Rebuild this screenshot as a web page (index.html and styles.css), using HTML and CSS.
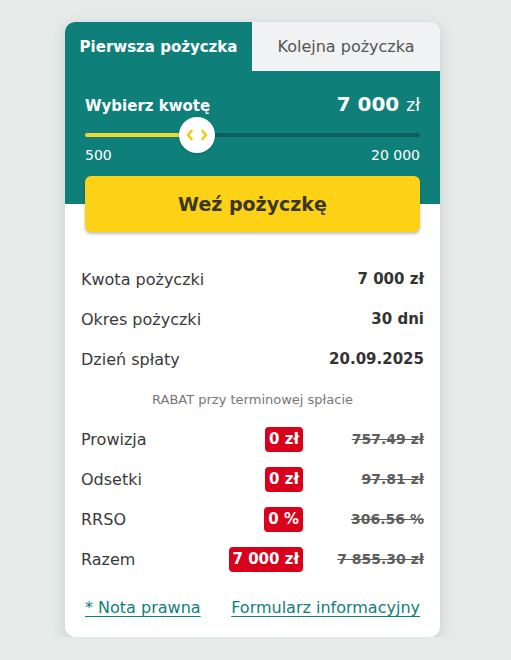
FILE: index.html
```html
<!DOCTYPE html>
<html lang="pl">
<head>
<meta charset="utf-8">
<link rel="stylesheet" href="styles.css">
</head>
<body>
<div class="card">
  <div class="tabs">
    <div class="tab active">Pierwsza pożyczka</div>
    <div class="tab">Kolejna pożyczka</div>
  </div>
  <div class="header">
    <div class="amount-row">
      <span class="amount-label">Wybierz kwotę</span>
      <span class="amount-value">7 000 <span class="cur">zł</span></span>
    </div>
    <div class="slider">
      <div class="track"><div class="fill" style="width:33.5%"></div></div>
      <div class="thumb" style="left:33.5%">
        <svg width="22" height="12" viewBox="0 0 22 12"><path d="M5.5 2 L2 6 L5.5 10" fill="none" stroke="#f5c816" stroke-width="2.6" stroke-linecap="round" stroke-linejoin="round"/><path d="M16.5 2 L20 6 L16.5 10" fill="none" stroke="#f5c816" stroke-width="2.6" stroke-linecap="round" stroke-linejoin="round"/></svg>
      </div>
    </div>
    <div class="range">
      <span>500</span>
      <span>20 000</span>
    </div>
    <button class="cta">Weź pożyczkę</button>
  </div>
  <div class="details">
    <div class="row"><span class="label">Kwota pożyczki</span><span class="val">7 000 zł</span></div>
    <div class="row"><span class="label">Okres pożyczki</span><span class="val">30 dni</span></div>
    <div class="row"><span class="label">Dzień spłaty</span><span class="val">20.09.2025</span></div>
    <div class="rabat">RABAT przy terminowej spłacie</div>
    <div class="row"><span class="label">Prowizja</span><span class="disc"><span class="badge">0 zł</span><s class="old">757.49 zł</s></span></div>
    <div class="row"><span class="label">Odsetki</span><span class="disc"><span class="badge">0 zł</span><s class="old">97.81 zł</s></span></div>
    <div class="row"><span class="label">RRSO</span><span class="disc"><span class="badge">0 %</span><s class="old">306.56 %</s></span></div>
    <div class="row"><span class="label">Razem</span><span class="disc"><span class="badge">7 000 zł</span><s class="old">7 855.30 zł</s></span></div>
  </div>
  <div class="links">
    <a href="#">* Nota prawna</a>
    <a href="#">Formularz informacyjny</a>
  </div>
</div>
</body>
</html>
```
FILE: styles.css
```css
* { box-sizing: border-box; }
body {
  margin: 0;
  background: #e6ebea;
  font-family: "DejaVu Sans", "Noto Sans", sans-serif;
  color: #333;
}
.card {
  width: 375px;
  margin: 22px 0 0 65px;
  background: #fff;
  border-radius: 10px;
  overflow: hidden;
  box-shadow: 0 4px 14px rgba(60, 80, 80, 0.18);
}
.tabs {
  display: flex;
  height: 49px;
}
.tab {
  display: flex;
  align-items: center;
  justify-content: center;
  font-size: 16px;
  color: #555;
  background: #f1f2f3;
  flex: 1;
}
.tab.active {
  flex: 0 0 187px;
  background: #0f7f7a;
  color: #fff;
  font-weight: 700;
  font-size: 15px;
}
.header {
  padding: 20px 20px 0;
  background: linear-gradient(#0f7f7a calc(100% - 28px), #fff 0);
}
.amount-row {
  display: flex;
  justify-content: space-between;
  align-items: baseline;
  color: #fff;
  height: 26px;
  line-height: 26px;
}
.amount-label {
  font-size: 15px;
  font-weight: 700;
}
.amount-value {
  font-size: 20px;
  font-weight: 700;
}
.cur {
  font-size: 17px;
  font-weight: 400;
}
.slider {
  position: relative;
  height: 28px;
  margin-top: 4px;
  display: flex;
  align-items: center;
}
.track {
  width: 100%;
  height: 4px;
  border-radius: 2px;
  background: #0a615d;
}
.fill {
  height: 100%;
  background: #f2d634;
  border-radius: 2px;
}
.thumb {
  position: absolute;
  top: 50%;
  width: 36px;
  height: 36px;
  margin: -18px 0 0 -18px;
  border-radius: 50%;
  background: #fff;
  display: flex;
  align-items: center;
  justify-content: center;
  box-shadow: 0 1px 3px rgba(0,0,0,0.15);
}
.range {
  display: flex;
  justify-content: space-between;
  color: #fff;
  font-size: 14px;
  height: 12px;
  line-height: 12px;
  align-items: center;
}
.cta {
  display: block;
  width: 100%;
  height: 56px;
  margin-top: 15px;
  border: 0;
  border-radius: 6px;
  background: #fdd116;
  color: #3b3726;
  font-family: inherit;
  font-size: 19px;
  font-weight: 600;
  box-shadow: 0 2px 3px rgba(0,0,0,0.25);
}
.details {
  padding: 27px 16px 0;
}
.row {
  display: flex;
  justify-content: space-between;
  align-items: center;
  height: 40px;
  font-size: 16px;
}
.label { color: #3a3a3a; }
.val { font-weight: 700; color: #333; font-size: 15px; }
.rabat {
  height: 40px;
  display: flex;
  align-items: center;
  justify-content: center;
  font-size: 13px;
  color: #777;
}
.disc {
  display: flex;
  align-items: center;
}
.badge {
  background: #d9001b;
  color: #fff;
  font-weight: 700;
  font-size: 15px;
  border-radius: 4px;
  padding: 3px 4px;
  line-height: 19px;
}
.old {
  width: 121px;
  text-align: right;
  font-weight: 700;
  font-size: 14px;
  color: #5e5e5e;
}
.links {
  display: flex;
  justify-content: space-between;
  padding: 19px 20px 20px;
  line-height: 19px;
}
.links a {
  color: #0f7f7a;
  font-size: 16px;
  text-decoration: underline;
  text-underline-offset: 3px;
}
```
